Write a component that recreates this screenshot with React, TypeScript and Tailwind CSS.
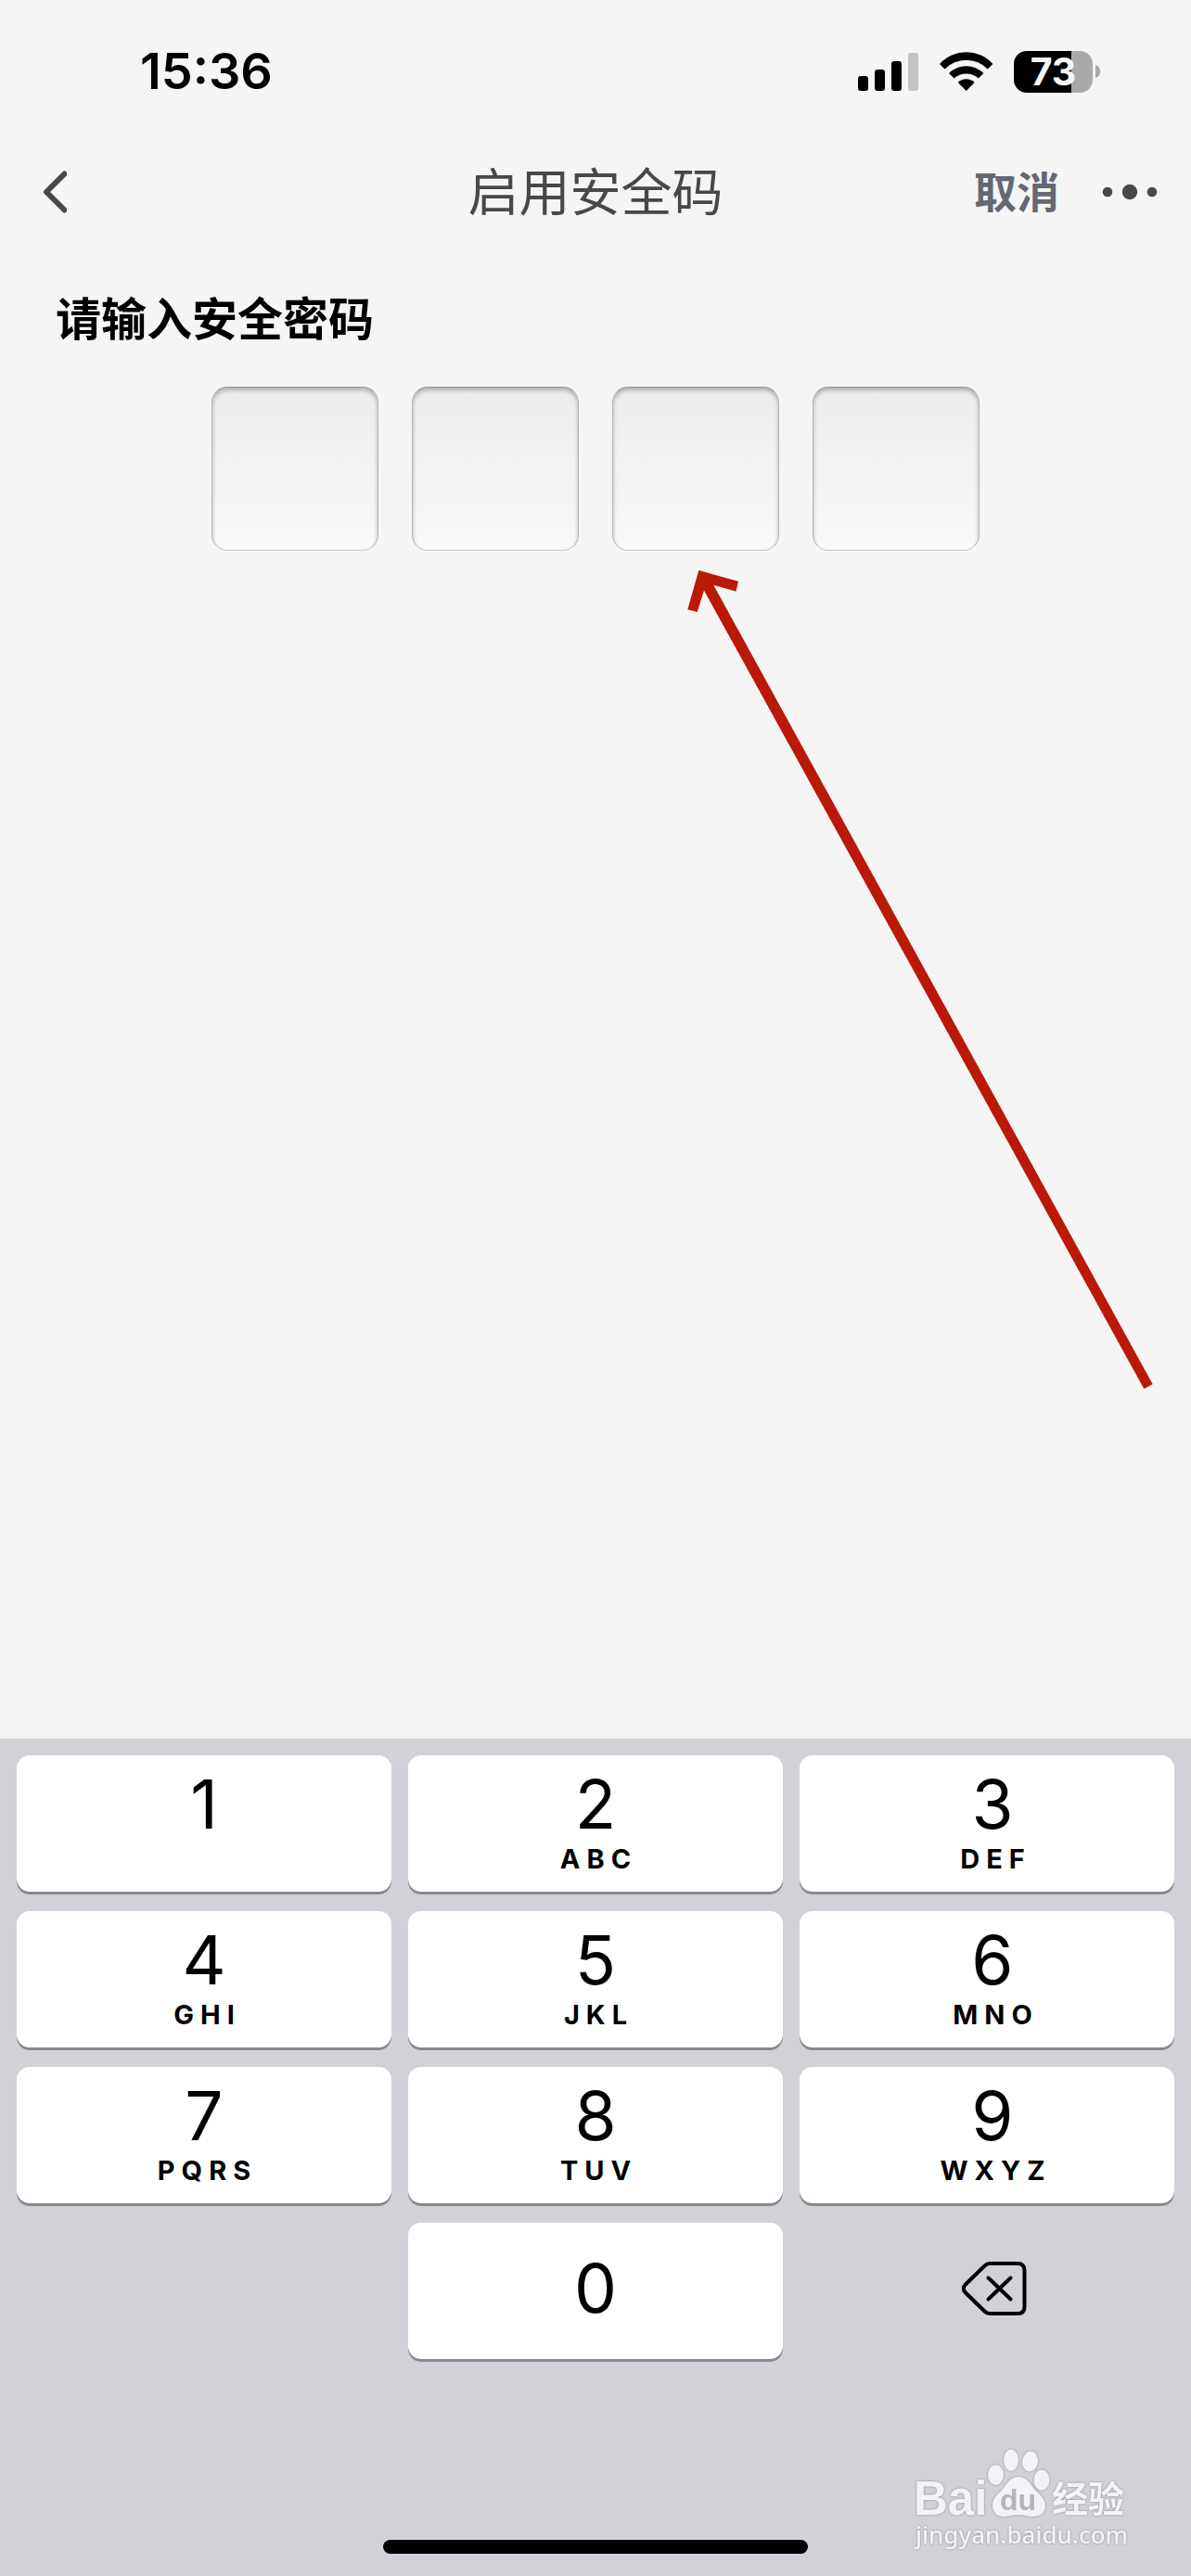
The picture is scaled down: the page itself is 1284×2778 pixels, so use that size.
import { useState } from "react";

interface KeyDef {
  digit: string;
  letters?: string;
}

const KEYS: KeyDef[] = [
  { digit: "1" },
  { digit: "2", letters: "ABC" },
  { digit: "3", letters: "DEF" },
  { digit: "4", letters: "GHI" },
  { digit: "5", letters: "JKL" },
  { digit: "6", letters: "MNO" },
  { digit: "7", letters: "PQRS" },
  { digit: "8", letters: "TUV" },
  { digit: "9", letters: "WXYZ" },
];

const CODE_LENGTH = 4;

function StatusBar() {
  return (
    <div className="flex h-[154px] items-center justify-between pr-[97px] pl-[151px] text-black">
      <span className="text-[54px] leading-none font-semibold">15:36</span>
      <div className="flex items-center">
        <svg width="66" height="42" viewBox="0 0 66 42" className="mr-[22px]" aria-hidden="true">
          <rect x="0" y="26" width="11" height="16" rx="3" />
          <rect x="18" y="19" width="11" height="23" rx="3" />
          <rect x="36" y="10" width="11" height="32" rx="3" />
          <rect x="54" y="1" width="11" height="41" rx="3" fill="#c4c4c4" />
        </svg>
        <svg width="58" height="42" viewBox="0 0 58 42" className="mr-[22px]" aria-hidden="true">
          <path d="M0 13A38.5 38.5 0 0 1 57.4 13L51.8 18.5A32.5 32.5 0 0 0 5.6 18.5Z" />
          <path d="M10 23A26.5 26.5 0 0 1 47.4 23L41.8 28.5A19.5 19.5 0 0 0 15.6 28.5Z" />
          <path d="M19.8 33A12.5 12.5 0 0 1 37.6 33L28.7 42Z" />
        </svg>
        <div className="flex h-[45px] w-[85px] items-center justify-center rounded-[14px] bg-linear-to-r from-black from-73% to-[#a9a9a9] to-73%">
          <span className="text-[41px] leading-none font-bold text-[#f5f5f5]">73</span>
        </div>
        <svg width="6" height="14" viewBox="0 0 6 14" className="ml-[3px]" aria-hidden="true">
          <path d="M0 0C7 2 7 12 0 14Z" fill="#a9a9a9" />
        </svg>
      </div>
    </div>
  );
}

function Header() {
  return (
    <header className="grid h-[106px] grid-cols-[1fr_auto_1fr] items-center px-9 text-[#484848]">
      <button type="button" aria-label="返回" className="justify-self-start pl-2">
        <svg width="28" height="46" viewBox="0 0 28 46" fill="none" aria-hidden="true">
          <path
            d="M25.500 3.500L6 23L25.500 42.500"
            stroke="currentColor"
            strokeWidth="6"
            strokeLinecap="round"
            strokeLinejoin="round"
          />
        </svg>
      </button>
      <h1 className="text-[55px] leading-none font-normal">启用安全码</h1>
      <div className="flex items-center gap-[46px] justify-self-end">
        <button type="button" className="text-[46px] leading-none font-bold text-[#646872]">
          取消
        </button>
        <button type="button" aria-label="更多">
          <svg width="60" height="18" viewBox="0 0 60 18" fill="currentColor" aria-hidden="true">
            <circle cx="6" cy="9" r="5.300" />
            <circle cx="30" cy="9" r="8.200" />
            <circle cx="54" cy="9" r="5.300" />
          </svg>
        </button>
      </div>
    </header>
  );
}

function Arrow() {
  return (
    <svg
      width="502"
      height="883"
      viewBox="741 615 502 883"
      className="pointer-events-none absolute top-full left-1/2 mt-[21px] ml-[99px]"
      aria-hidden="true"
    >
      <path
        d="M753.300 615L796 627L793.500 637.700L769.300 631L1242.700 1492.700L1233.300 1497.700L759 636.700L751.700 660L741.300 657.300Z"
        fill="#bb1908"
      />
    </svg>
  );
}

function Watermark() {
  return (
    <svg
      width="240"
      height="120"
      viewBox="980 2636 240 120"
      className="absolute right-[64px] bottom-[22px] drop-shadow-[0_0_1px_#85868e]"
      fill="#f2f3f5"
      aria-hidden="true"
    >
      <text x="985" y="2712" className="font-['Liberation_Sans'] text-[51px] font-bold">
        Bai
      </text>
      <ellipse cx="1073.500" cy="2669" rx="8.500" ry="11" />
      <ellipse cx="1090" cy="2653" rx="8" ry="11.500" />
      <ellipse cx="1110.500" cy="2654.500" rx="8.500" ry="11" transform="rotate(8 1110.500 2654.500)" />
      <ellipse cx="1123" cy="2674.500" rx="8.500" ry="11" />
      <path d="M1098 2671C1106 2671 1110 2677 1114 2683C1119 2689 1127 2693 1127 2703C1127 2710 1121 2714 1114 2714C1108 2714 1104 2712 1098 2712C1092 2712 1088 2714 1082 2714C1075 2714 1070 2709 1070 2702C1070 2693 1077 2689 1082 2683C1086 2677 1090 2671 1098 2671Z" />
      <text x="1078" y="2707" fill="#b4b5bc" className="font-['Liberation_Sans'] text-[32px] font-bold">
        du
      </text>
      <text x="1134" y="2709" className="font-['Noto_Sans_CJK_SC'] text-[39px] font-bold">
        经验
      </text>
      <text x="987" y="2743" className="font-['Noto_Sans'] text-[26px] font-medium">
        jingyan.baidu.com
      </text>
    </svg>
  );
}

function NumberKey({ digit, letters, onPress }: KeyDef & { onPress: (digit: string) => void }) {
  return (
    <button
      type="button"
      onClick={() => onPress(digit)}
      className="flex h-[147px] flex-col items-center rounded-[14px] bg-white pt-[18px] text-black shadow-[0_3px_0_#88898e] nth-[3n]:pl-3"
    >
      <span className="text-[73px] leading-[70px]">{digit}</span>
      {letters && (
        <span className="mt-[6px] pl-[7px] text-[29px] leading-[36px] font-bold tracking-[7px]">
          {letters}
        </span>
      )}
    </button>
  );
}

export default function App() {
  const [code, setCode] = useState<string>("");

  const handlePress = (digit: string) => {
    setCode((prev) => (prev.length < CODE_LENGTH ? prev + digit : prev));
  };

  const handleDelete = () => setCode((prev) => prev.slice(0, -1));

  return (
    <div className="flex min-h-screen flex-col bg-[#f5f5f5] font-['Inter','Noto_Sans_CJK_SC',sans-serif]">
      <StatusBar />
      <Header />

      <main className="flex-1 pt-[52px]">
        <label htmlFor="code-0" className="block px-[60px] text-[49px] leading-[66px] font-bold text-black">
          请输入安全密码
        </label>
        <div className="relative mt-[39px] flex justify-center gap-9">
          {Array.from({ length: CODE_LENGTH }, (_, i) => (
            <input
              key={i}
              id={`code-${i}`}
              type="password"
              inputMode="numeric"
              readOnly
              aria-label={`安全密码第${i + 1}位`}
              value={code[i] ?? ""}
              className="h-[177px] w-[180px] rounded-[17px] border border-[#b4b4b4] border-t-[#979797] border-b-[#cccccc] bg-linear-to-b from-[#ebebeb] to-[#fafafa] text-center text-[73px] shadow-[inset_0_3px_4px_#b0b0b0,0_2px_0_#f9f9f9] outline-none"
            />
          ))}
          <Arrow />
        </div>
      </main>

      {/* Numeric keyboard */}
      <section className="relative bg-[#d1d2d8] px-[18px] pt-[18px] pb-6">
        <div className="grid grid-cols-3 gap-x-[18px] gap-y-[21px]">
          {KEYS.map((key) => (
            <NumberKey key={key.digit} {...key} onPress={handlePress} />
          ))}
          <button
            type="button"
            onClick={() => handlePress("0")}
            className="col-start-2 flex h-[147px] items-center justify-center rounded-[14px] bg-white pb-[6px] text-[73px] leading-[70px] text-black shadow-[0_3px_0_#88898e]"
          >
            0
          </button>
          <button
            type="button"
            aria-label="删除"
            onClick={handleDelete}
            className="flex h-[147px] items-center justify-center pb-[6px] pl-4"
          >
            <svg width="70" height="60" viewBox="0 0 70 60" fill="none" aria-hidden="true">
              <path
                d="M30 3H60Q67.500 3 67.500 10.500V49.500Q67.500 57 60 57H30Q27 57 24.500 54.500L3.500 34Q0 30 3.500 26L24.500 5.500Q27 3 30 3Z"
                stroke="black"
                strokeWidth="4"
              />
              <path d="M28.500 18.500L52.500 41.500M52.500 18.500L28.500 41.500" stroke="black" strokeWidth="4" strokeLinecap="round" />
            </svg>
          </button>
        </div>
        <div className="mx-auto mt-[195px] h-[15px] w-[458px] rounded-full bg-black" />
        <Watermark />
      </section>
    </div>
  );
}
